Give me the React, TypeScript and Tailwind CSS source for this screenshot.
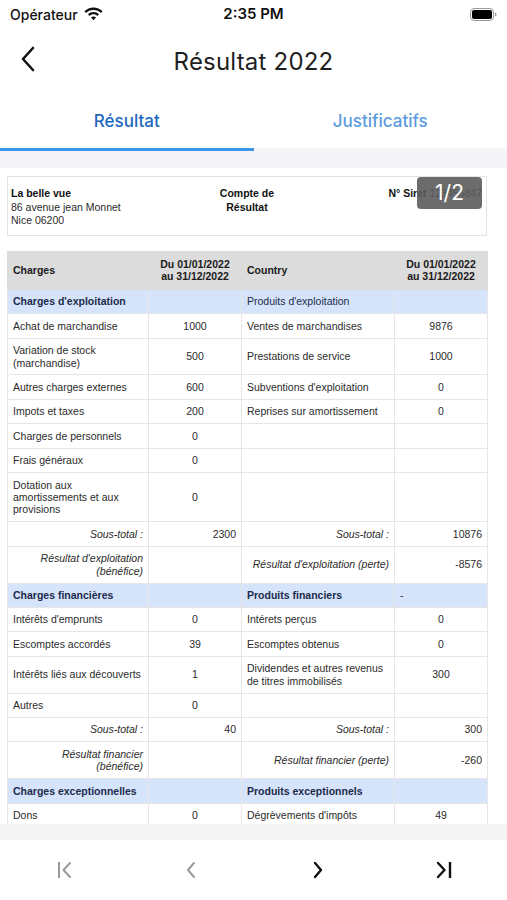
import type { ReactNode } from 'react';

type Row =
  | { kind: 'section'; left: string; right: string; rightBold?: boolean; rightValue?: string }
  | { kind: 'item'; left: ReactNode; lv?: string; right?: ReactNode; rv?: string }
  | { kind: 'subtotal'; lv: string; rv: string }
  | { kind: 'result'; left: ReactNode; right: string; rv: string };

const ROWS: Row[] = [
  { kind: 'section', left: "Charges d'exploitation", right: "Produits d'exploitation" },
  { kind: 'item', left: 'Achat de marchandise', lv: '1000', right: 'Ventes de marchandises', rv: '9876' },
  {
    kind: 'item',
    left: (
      <>
        Variation de stock
        <br />
        (marchandise)
      </>
    ),
    lv: '500',
    right: 'Prestations de service',
    rv: '1000',
  },
  { kind: 'item', left: 'Autres charges externes', lv: '600', right: "Subventions d'exploitation", rv: '0' },
  { kind: 'item', left: 'Impots et taxes', lv: '200', right: 'Reprises sur amortissement', rv: '0' },
  { kind: 'item', left: 'Charges de personnels', lv: '0' },
  { kind: 'item', left: 'Frais généraux', lv: '0' },
  {
    kind: 'item',
    left: (
      <>
        Dotation aux
        <br />
        amortissements et aux
        <br />
        provisions
      </>
    ),
    lv: '0',
  },
  { kind: 'subtotal', lv: '2300', rv: '10876' },
  {
    kind: 'result',
    left: (
      <>
        Résultat d'exploitation
        <br />
        (bénéfice)
      </>
    ),
    right: "Résultat d'exploitation (perte)",
    rv: '-8576',
  },
  { kind: 'section', left: 'Charges financières', right: 'Produits financiers', rightBold: true, rightValue: '-' },
  { kind: 'item', left: "Intérêts d'emprunts", lv: '0', right: 'Intérets perçus', rv: '0' },
  { kind: 'item', left: 'Escomptes accordés', lv: '39', right: 'Escomptes obtenus', rv: '0' },
  {
    kind: 'item',
    left: 'Intérêts liés aux découverts',
    lv: '1',
    right: (
      <>
        Dividendes et autres revenus
        <br />
        de titres immobilisés
      </>
    ),
    rv: '300',
  },
  { kind: 'item', left: 'Autres', lv: '0' },
  { kind: 'subtotal', lv: '40', rv: '300' },
  {
    kind: 'result',
    left: (
      <>
        Résultat financier
        <br />
        (bénéfice)
      </>
    ),
    right: 'Résultat financier (perte)',
    rv: '-260',
  },
  { kind: 'section', left: 'Charges exceptionnelles', right: 'Produits exceptionnels', rightBold: true },
  { kind: 'item', left: 'Dons', lv: '0', right: "Dégrèvements d'impôts", rv: '49' },
];

const cell = 'border border-[#e6e6e6] px-[5px] py-[5.5px] align-middle';

function TableRow({ row }: { row: Row }) {
  if (row.kind === 'section') {
    return (
      <tr className="bg-[#d6e4fb] text-[#1c2b4b]">
        <td className={`${cell} border-[#d6e4fb] font-bold`}>{row.left}</td>
        <td className={`${cell} border-[#d6e4fb]`} />
        <td className={`${cell} border-[#d6e4fb] ${row.rightBold ? 'font-bold' : ''}`}>{row.right}</td>
        <td className={`${cell} border-[#d6e4fb]`}>{row.rightValue ?? ''}</td>
      </tr>
    );
  }
  if (row.kind === 'subtotal') {
    return (
      <tr>
        <td className={`${cell} text-right italic`}>Sous-total :</td>
        <td className={`${cell} text-right`}>{row.lv}</td>
        <td className={`${cell} text-right italic`}>Sous-total :</td>
        <td className={`${cell} text-right`}>{row.rv}</td>
      </tr>
    );
  }
  if (row.kind === 'result') {
    return (
      <tr>
        <td className={`${cell} text-right italic`}>{row.left}</td>
        <td className={cell} />
        <td className={`${cell} text-right italic`}>{row.right}</td>
        <td className={`${cell} text-right`}>{row.rv}</td>
      </tr>
    );
  }
  return (
    <tr>
      <td className={cell}>{row.left}</td>
      <td className={`${cell} text-center`}>{row.lv ?? ''}</td>
      <td className={cell}>{row.right ?? ''}</td>
      <td className={`${cell} text-center`}>{row.rv ?? ''}</td>
    </tr>
  );
}

function Wifi() {
  return (
    <svg width="19" height="14" viewBox="0 0 19 14" fill="#111">
      <path d="M9.5 0.5C13 0.5 16.2 1.9 18.6 4.2L17 5.9C15 4 12.4 2.9 9.5 2.9S4 4 2 5.9L0.4 4.2C2.8 1.9 6 0.5 9.5 0.5Z" />
      <path d="M9.5 5C11.6 5 13.6 5.8 15 7.2L13.4 8.9C12.4 7.9 11 7.3 9.5 7.3S6.6 7.9 5.6 8.9L4 7.2C5.4 5.8 7.4 5 9.5 5Z" />
      <path d="M9.5 9.4C10.5 9.4 11.3 9.8 12 10.4L9.5 13.2L7 10.4C7.7 9.8 8.5 9.4 9.5 9.4Z" />
    </svg>
  );
}

function Battery() {
  return (
    <svg width="27" height="13" viewBox="0 0 27 13">
      <rect x="0.5" y="0.5" width="23" height="12" rx="3.5" fill="none" stroke="#9a9a9a" />
      <rect x="2" y="2" width="20" height="9" rx="2" fill="#000" />
      <path d="M25 4.5C26 4.8 26.5 5.5 26.5 6.5S26 8.2 25 8.5Z" fill="#9a9a9a" />
    </svg>
  );
}

export default function App() {
  return (
    <div className="flex h-[900px] w-full flex-col overflow-hidden bg-white font-['Inter',sans-serif]">
      {/* status bar */}
      <div className="flex h-[28px] items-center justify-between px-[10px] text-[#111]">
        <div className="flex w-[120px] items-center gap-[6px] text-[14px] font-medium">
          <span>Opérateur</span>
          <Wifi />
        </div>
        <span className="text-[15px] font-semibold">2:35 PM</span>
        <div className="flex w-[120px] justify-end">
          <Battery />
        </div>
      </div>

      {/* nav bar */}
      <div className="relative flex h-[67px] items-center justify-center">
        <button type="button" className="absolute left-[19px] top-[18px]">
          <svg width="18" height="26" viewBox="0 0 18 26" fill="none">
            <path d="M14 2L4 13L14 24" stroke="#111" strokeWidth="2.6" strokeLinecap="round" strokeLinejoin="round" />
          </svg>
        </button>
        <h1 className="text-[24px] font-normal tracking-[0.2px] text-[#1f1f1f]">Résultat 2022</h1>
      </div>

      {/* tabs */}
      <div className="flex h-[56px]">
        <div className="flex flex-1 flex-col">
          <div className="flex flex-1 items-center justify-center pt-[1px] text-[17px] font-medium text-[#2268bd]">
            Résultat
          </div>
          <div className="h-[3px] bg-[#3b95e8]" />
        </div>
        <div className="flex flex-1 flex-col">
          <div className="flex flex-1 items-center justify-center pt-[1px] text-[17px] font-medium text-[#5b9be0]">
            Justificatifs
          </div>
          <div className="h-[3px] bg-[#f6f6f8]" />
        </div>
      </div>

      {/* document */}
      <div className="relative flex-1 overflow-hidden font-['Liberation_Sans',Arial,sans-serif] text-[10.5px] leading-[12.4px] text-[#2b2b2b]">
        <div className="h-[17px] bg-[#f5f5f7]" />
        <div className="px-[7px] pt-[8px]">
          <div className="grid h-[60px] w-[480px] grid-cols-3 border border-[#e3e3e3] px-[3px] pt-[10px] leading-[13.5px]">
            <div>
              <div className="font-bold text-[#111]">La belle vue</div>
              <div>86 avenue jean Monnet</div>
              <div>Nice 06200</div>
            </div>
            <div className="text-center font-bold text-[#111]">
              Compte de
              <br />
              Résultat
            </div>
            <div className="pr-[1px] text-right text-[#111]">
              <span className="font-bold">N° Siret</span> <span>123456847</span>
            </div>
          </div>

          <table className="mt-[15px] w-[480px] table-fixed border-collapse">
            <colgroup>
              <col className="w-[141px]" />
              <col className="w-[93px]" />
              <col className="w-[153px]" />
              <col className="w-[93px]" />
            </colgroup>
            <thead>
              <tr className="bg-[#dcdcdc] font-bold text-[#1a1a1a]">
                <th className="border border-[#dcdcdc] px-[5px] py-[6px] text-left">Charges</th>
                <th className="border border-[#dcdcdc] px-[2px] py-[6px] text-center">
                  Du 01/01/2022
                  <br />
                  au 31/12/2022
                </th>
                <th className="border border-[#dcdcdc] px-[5px] py-[6px] text-left">Country</th>
                <th className="border border-[#dcdcdc] px-[2px] py-[6px] text-center">
                  Du 01/01/2022
                  <br />
                  au 31/12/2022
                </th>
              </tr>
            </thead>
            <tbody>
              {ROWS.map((row, i) => (
                <TableRow key={i} row={row} />
              ))}
            </tbody>
          </table>
        </div>

        {/* page indicator */}
        <div className="absolute left-[417px] top-[26px] flex h-[32px] w-[65px] items-center justify-center rounded-[4px] bg-[#5c5c5c]/90 font-['Inter',sans-serif] text-[21px] text-white">
          1/2
        </div>
      </div>

      {/* bottom */}
      <div className="h-[16px] bg-[#f4f4f4]" />
      <div className="flex h-[60px] items-center justify-around">
        <svg width="20" height="20" viewBox="0 0 20 20" fill="none" className="ml-[2px]">
          <path d="M4 2V18" stroke="#9a9a9a" strokeWidth="2" />
          <path d="M15 3L8.5 10L15 17" stroke="#9a9a9a" strokeWidth="2" strokeLinecap="round" strokeLinejoin="round" />
        </svg>
        <svg width="20" height="20" viewBox="0 0 20 20" fill="none">
          <path d="M13 3L7 10L13 17" stroke="#9a9a9a" strokeWidth="2" strokeLinecap="round" strokeLinejoin="round" />
        </svg>
        <svg width="20" height="20" viewBox="0 0 20 20" fill="none">
          <path d="M7 3L13 10L7 17" stroke="#111" strokeWidth="2.4" strokeLinecap="round" strokeLinejoin="round" />
        </svg>
        <svg width="20" height="20" viewBox="0 0 20 20" fill="none">
          <path d="M4 3L10.5 10L4 17" stroke="#111" strokeWidth="2.4" strokeLinecap="round" strokeLinejoin="round" />
          <path d="M16 2V18" stroke="#111" strokeWidth="2.4" />
        </svg>
      </div>
    </div>
  );
}
